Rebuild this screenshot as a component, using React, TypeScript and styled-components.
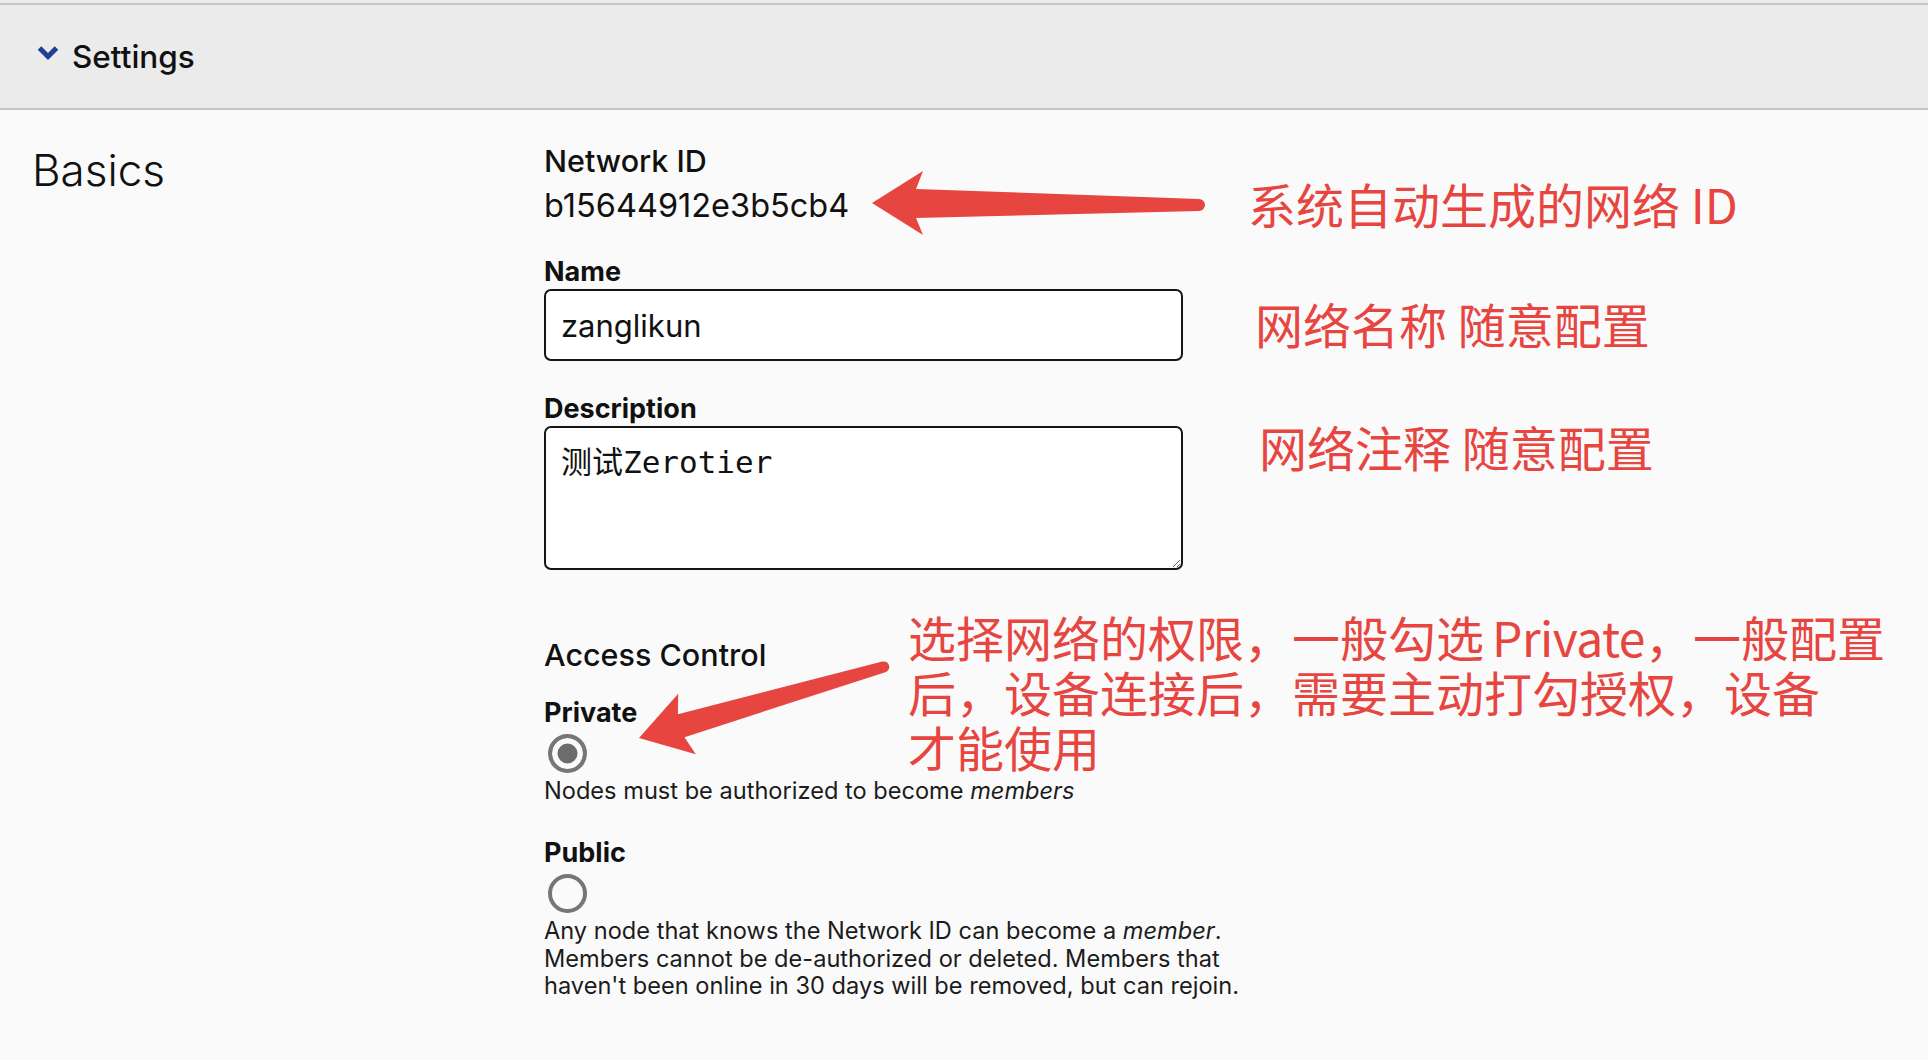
import styled, { createGlobalStyle } from 'styled-components';

const GlobalStyle = createGlobalStyle`
  html, body {
    margin: 0;
    padding: 0;
    background: #fafafa;
  }
  body {
    font-family: Inter, "Noto Sans", "Noto Sans CJK SC", sans-serif;
    color: #111;
  }
  * {
    box-sizing: border-box;
  }
`;

const Page = styled.div`
  position: relative;
  min-height: 100vh;
  overflow: hidden;
`;

const Header = styled.header`
  padding-top: 3px;
  background: #ebebeb;
`;

const HeaderBar = styled.div`
  display: flex;
  align-items: center;
  gap: 13px;
  height: 107px;
  padding-left: 37px;
  border-top: 2px solid #c5c5c5;
  border-bottom: 2px solid #c5c5c5;
`;

const ChevronBox = styled.span`
  display: flex;
  margin-bottom: 7px;
`;

const HeaderTitle = styled.h2`
  margin: 0;
  font-size: 31.5px;
  font-weight: 500;
  color: #111;
`;

const Main = styled.main`
  display: grid;
  grid-template-columns: 512px 1fr;
  padding: 33px 0 60px 32px;
`;

const SectionTitle = styled.h1`
  margin: 1px 0 0;
  font-size: 44px;
  line-height: 52px;
  font-weight: 300;
  color: #111;
`;

const Fields = styled.div`
  display: flex;
  flex-direction: column;
  align-items: flex-start;
`;

const GroupTitle = styled.h3<{ $gap?: number }>`
  margin: ${(p) => p.$gap ?? 0}px 0 0;
  font-size: 30.5px;
  line-height: 36px;
  font-weight: 500;
  color: #111;
`;

const IdValue = styled.div`
  margin-top: 9px;
  font-size: 32.5px;
  line-height: 36px;
  color: #111;
`;

const Field = styled.label<{ $gap: number }>`
  display: flex;
  flex-direction: column;
  margin-top: ${(p) => p.$gap}px;
`;

const Label = styled.span`
  font-size: 27px;
  line-height: 32px;
  font-weight: 700;
  color: #111;
`;

const TextInput = styled.input`
  display: block;
  width: 639px;
  height: 72px;
  margin-top: 1px;
  padding: 0 15px;
  border: 2px solid #151515;
  border-radius: 7px;
  background: #fff;
  font-family: Inter, "Noto Sans CJK SC", sans-serif;
  font-size: 31px;
  color: #111;
  outline: none;
`;

const TextArea = styled.textarea`
  display: block;
  width: 639px;
  height: 144px;
  margin-top: 1px;
  padding: 16px 15px;
  border: 2px solid #151515;
  border-radius: 7px;
  background: #fff;
  font-family: "DejaVu Sans Mono", "Noto Sans CJK SC", monospace;
  font-size: 31px;
  line-height: 36px;
  color: #111;
  outline: none;
`;

const Option = styled.div<{ $gap: number }>`
  display: flex;
  flex-direction: column;
  align-items: flex-start;
  margin-top: ${(p) => p.$gap}px;
`;

const Radio = styled.input.attrs({ type: 'radio' })`
  appearance: none;
  display: block;
  width: 39px;
  height: 39px;
  margin: 5px 0 0 4px;
  border: 4px solid #767676;
  border-radius: 50%;
  background: #fafafa;

  &:checked {
    background: #6c6c6c;
    box-shadow: inset 0 0 0 5.5px #fafafa;
  }
`;

const Hint = styled.p`
  margin: 4px 0 0;
  max-width: 705px;
  font-size: 23.6px;
  line-height: 27.3px;
  color: #1c1c1c;
`;

const Note = styled.div<{ $top: number; $left: number }>`
  position: absolute;
  top: ${(p) => p.$top}px;
  left: ${(p) => p.$left}px;
  font-family: "Noto Sans CJK SC", "Noto Sans", sans-serif;
  font-size: 48px;
  line-height: 55px;
  color: #e64540;
  white-space: nowrap;
  pointer-events: none;
`;

const Latin = styled.span`
  margin-left: 8px;
  letter-spacing: -0.5px;
`;

const ArrowLayer = styled.svg`
  position: absolute;
  top: 0;
  left: 0;
  width: 1928px;
  height: 1060px;
  pointer-events: none;
`;

const ChevronDown = () => (
  <ChevronBox>
    <svg width="22" height="16" viewBox="0 0 22 16">
      <polyline
        points="2.5,3 11,11.5 19.5,3"
        fill="none"
        stroke="#243f98"
        strokeWidth="5"
        strokeLinejoin="miter"
      />
    </svg>
  </ChevronBox>
);

const App = () => {
  return (
    <Page>
      <GlobalStyle />
      <Header>
        <HeaderBar>
          <ChevronDown />
          <HeaderTitle>Settings</HeaderTitle>
        </HeaderBar>
      </Header>

      <Main>
        <SectionTitle>Basics</SectionTitle>
        <Fields>
          <GroupTitle>Network ID</GroupTitle>
          <IdValue>b15644912e3b5cb4</IdValue>

          <Field $gap={32}>
            <Label>Name</Label>
            <TextInput defaultValue="zanglikun" />
          </Field>

          <Field $gap={32}>
            <Label>Description</Label>
            <TextArea defaultValue="测试Zerotier" />
          </Field>

          <GroupTitle $gap={67}>Access Control</GroupTitle>

          <Option $gap={24}>
            <Label>Private</Label>
            <Radio name="access" defaultChecked />
            <Hint>
              Nodes must be authorized to become <em>members</em>
            </Hint>
          </Option>

          <Option $gap={33}>
            <Label>Public</Label>
            <Radio name="access" />
            <Hint>
              Any node that knows the Network ID can become a <em>member</em>.
              Members cannot be de-authorized or deleted. Members that haven't
              been online in 30 days will be removed, but can rejoin.
            </Hint>
          </Option>
        </Fields>
      </Main>

      <Note $top={176} $left={1248}>系统自动生成的网络 ID</Note>
      <Note $top={296} $left={1255}>网络名称 随意配置</Note>
      <Note $top={419} $left={1259}>网络注释 随意配置</Note>
      <Note $top={609} $left={908}>
        选择网络的权限，一般勾选<Latin>Private</Latin>，一般配置
        <br />
        后，设备连接后，需要主动打勾授权，设备
        <br />
        才能使用
      </Note>

      <ArrowLayer viewBox="0 0 1928 1060">
        <path
          d="M872 203 L923 171 L916 189 L1199 199 A6 6 0 0 1 1199 211 L916 218 L923 235 Z"
          fill="#e64540"
        />
        <path
          d="M639 738 L678.2 693.8 L677.9 714.2 L882.3 661.6 A5.5 5.5 0 0 1 885.3 672.2 L684.5 737.2 L695.8 754.2 Z"
          fill="#e64540"
        />
      </ArrowLayer>
    </Page>
  );
};

export default App;
